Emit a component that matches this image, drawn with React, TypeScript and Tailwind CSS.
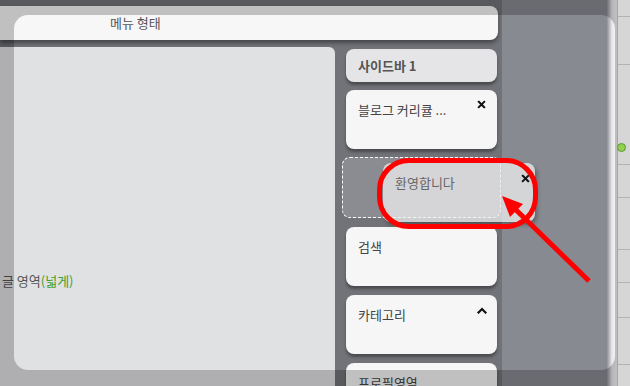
import React from "react";

type Widget = {
  title: string;
  icon?: "close" | "up";
};

const widgets: Widget[] = [
  { title: "검색" },
  { title: "카테고리", icon: "up" },
  { title: "프로필영역" },
];

function CloseIcon() {
  return (
    <svg width="9" height="9" viewBox="0 0 9 9" className="block">
      <path d="M1.8 1.8 L7.2 7.2 M7.2 1.8 L1.8 7.2" stroke="#111" strokeWidth="2" strokeLinecap="square" />
    </svg>
  );
}

function UpIcon() {
  return (
    <svg width="10" height="7" viewBox="0 0 10 7" className="block">
      <path d="M1.5 5.5 L5 2 L8.5 5.5" stroke="#111" strokeWidth="2.2" fill="none" strokeLinecap="square" />
    </svg>
  );
}

function WidgetCard({ title, icon }: Widget) {
  return (
    <div className="h-[59px] shrink-0 rounded-[8px] bg-[#f6f6f6] shadow-[0_3px_3px_rgba(0,0,0,0.35)] px-[12px] pt-[10px] flex items-start justify-between">
      <span className="text-[13px] leading-[20px] text-[#444]">{title}</span>
      {icon === "close" && (
        <span className="-mr-[1px]">
          <CloseIcon />
        </span>
      )}
      {icon === "up" && (
        <span className="mt-[2px] -mr-[2px]">
          <UpIcon />
        </span>
      )}
    </div>
  );
}

export default function App() {
  return (
    <div
      className="relative w-[630px] h-[386px] overflow-hidden bg-[#878a91]"
      style={{ fontFamily: '"Noto Sans CJK KR", "Noto Sans", sans-serif' }}
    >
      <div className="flex h-full">
        {/* layout editor */}
        <div className="w-[502px] shrink-0 bg-[#717378] pt-[6px] flex flex-col">
          {/* 메뉴 */}
          <div className="h-[34px] w-[498px] rounded-r-[8px] bg-[#f7f7f7] shadow-[0_3px_4px_rgba(0,0,0,0.4)] pl-[110px] flex items-center">
            <span className="text-[13px] text-[#555]">메뉴 형태</span>
          </div>

          <div className="mt-[7px] flex flex-1 min-h-0">
            {/* 본문 */}
            <div className="w-[335px] shrink-0 rounded-tr-[6px] bg-[#e0e1e3] pl-[2px] pt-[220px]">
              <span className="text-[13px] leading-[20px] text-[#555]">
                글 영역<span className="text-[#3f9f2f]">(넓게)</span>
              </span>
            </div>

            {/* 사이드바 */}
            <div className="ml-[11px] w-[151px] pt-[2px] flex flex-col gap-[8px]">
              <div className="h-[33px] shrink-0 rounded-[8px] bg-[#e5e5e7] shadow-[0_3px_3px_rgba(0,0,0,0.35)] px-[12px] flex items-center">
                <span className="text-[13px] font-bold text-[#555]">사이드바 1</span>
              </div>
              <WidgetCard title="블로그 커리큘 ..." icon="close" />
              <div className="-mx-[4px] h-[61px] shrink-0 rounded-[8px] border-[1.5px] border-dashed border-white bg-[#8a8c92]" />
              <div className="flex flex-col gap-[9px] mt-[1px]">
                {widgets.map((w) => (
                  <WidgetCard key={w.title} {...w} />
                ))}
              </div>
            </div>
          </div>
        </div>

        <div className="flex-1 bg-[#878a91]" />
        <div className="w-[10px] bg-gradient-to-r from-[#8f9197] via-[#e9e9ec] to-[#f7f7f9]" />

        {/* right column */}
        <div className="w-[13px] shrink-0 border-l border-[#a5a5a5] bg-[#d6d6d6] flex flex-col">
          {[17, 48, 100, 33, 52, 33, 35, 47].map((h, i) => (
            <div key={i} style={{ height: h }} className="shrink-0 border-b border-[#b3b3b3]" />
          ))}
        </div>
      </div>

      {/* spotlight */}
      <div className="pointer-events-none absolute left-0 top-0 w-[617px] h-full overflow-hidden">
        <div className="absolute left-[14px] top-[15px] w-[601px] h-[355px] rounded-[14px] shadow-[0_0_0_9999px_rgba(0,0,0,0.22)]" />
      </div>

      {/* green handle */}
      <div className="absolute left-[617px] top-[143px] w-[9px] h-[9px] rounded-full bg-[#8fd14f] border border-[#5c9a2c]" />

      {/* dragged widget */}
      <div className="absolute left-[383px] top-[163px] w-[152px] h-[59px] rounded-[8px] bg-[#eeeeee]/75 shadow-[2px_3px_4px_rgba(0,0,0,0.3)] px-[12px] pt-[10px] flex items-start justify-between">
        <span className="text-[13px] leading-[20px] text-[#666]">환영합니다</span>
        <span className="mt-[1px] -mr-[7px]">
          <CloseIcon />
        </span>
      </div>

      {/* annotation */}
      <div className="absolute left-[377px] top-[158px] w-[161px] h-[71px] rounded-[32px] border-[5px] border-[#f00]" />
      <svg className="absolute left-0 top-0" width="630" height="386">
        <line x1="512" y1="206" x2="589" y2="281" stroke="#f00" strokeWidth="5" />
        <polygon points="502,196 523,204 510,217" fill="#f00" />
      </svg>
    </div>
  );
}
